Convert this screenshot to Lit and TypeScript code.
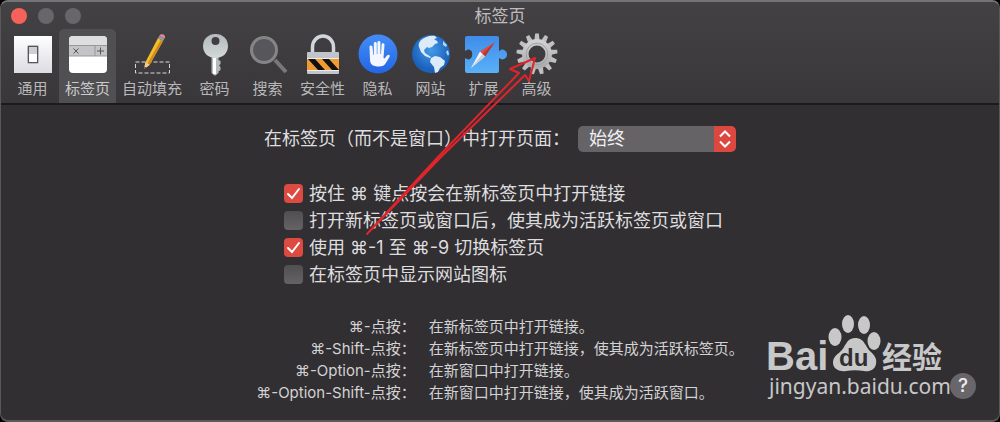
import { LitElement, html, css, svg } from "lit";
import { customElement, state } from "lit/decorators.js";

const general = svg`
  <rect x="2" y="3" width="38" height="37" fill="url(#g-white)"/>
  <rect x="15" y="12" width="12" height="19" rx="2" fill="#b9b9bd"/>
  <rect x="16.500" y="13.500" width="9" height="16" fill="#fff" stroke="#55555a" stroke-width="1"/>
  <rect x="17" y="14" width="8" height="7" fill="#cfcfd3"/>`;

const tabs = svg`
  <rect x="2" y="3" width="38" height="37" rx="4" fill="#fff"/>
  <path d="M2 12V7a4 4 0 0 1 4-4h30a4 4 0 0 1 4 4v5z" fill="#dededf"/>
  <rect x="2" y="12" width="38" height="11" fill="#c4c4c6"/>
  <path d="M2 12.500H40M2 23H40M28 12v11" stroke="#98989b" stroke-width="1"/>
  <path d="M6.500 15.500l5 5m0-5l-5 5M33.500 14.500v7m-3.500-3.500h7" stroke="#55555a" stroke-width="1"/>`;

const autofill = svg`
  <rect x="4.500" y="29" width="34" height="11" fill="none" stroke="#d8d8da" stroke-dasharray="4 2"/>
  <path d="M13 36l1.500-7L27 5l5 3-13.500 24z" fill="#f3bd2e"/>
  <path d="M18.500 32L32 8l-2-1.200L16.500 30.500z" fill="#d18b1c"/>
  <path d="M13 36l1.500-7 4 3z" fill="#edcfa5"/><path d="M13 36l.5-2.500 1.500 1z" fill="#333"/>
  <path d="M27 5l1.500-2.500 5 3L32 8z" fill="#8b98a8"/>
  <path d="M28.500 2.500C30-.5 36 2 33.500 5.500z" fill="#e0899a"/>`;

const key = svg`
  <path d="M17.500 24h7v3l2 1v3l-1.500 1.500 1.500 1.500v3l-2 1.500V40l-3 2.500h-1L17.500 40z" fill="#b4bbbd"/>
  <path fill-rule="evenodd" d="M21.500 1a12 12 0 0 1 12.500 12c0 7-5 12-12.500 12S9 20 9 13A12 12 0 0 1 21.500 1zm0 3a4 4 0 1 0 0 8 4 4 0 0 0 0-8z" fill="url(#g-key)"/>
  <path d="M20.500 25v16" stroke="#fff" stroke-width="3"/>`;

const search = svg`
  <path d="M28 27L39 39" stroke="#78787b" stroke-width="4"/>
  <circle cx="17" cy="17" r="12.500" fill="#57575b" stroke="#858588" stroke-width="3"/>`;

const lock = svg`
  <path d="M10.500 22V14a10.500 11 0 0 1 21 0v8" fill="none" stroke="#d2d6db" stroke-width="3.500"/>
  <rect x="5" y="19" width="32" height="22" rx="1" fill="#bfc5ca"/>
  <rect x="5" y="26" width="32" height="11" fill="#f29a32"/>
  <path d="M6 26h7l10 11h-7zM20 26h7l10 11h-7z" fill="#111"/>
  <path d="M5 25.500h32M5 37.500h32" stroke="#eceff1"/>`;

const hand = svg`
  <circle cx="21" cy="21" r="19.500" fill="url(#g-blue)"/>
  <path d="M13 27L12.500 14c0-2 2.800-2 3 0l.8 8 .5 0V10.500c0-2 3-2 3 0V21h.6V9.500c0-2 3-2 3 0V21h.6l.6-9.500c.2-2 3-1.600 2.900.2L26.500 25l1 .5 2.500-3c1.300-1.500 3.500-.5 2.500 1.500l-4 6.500c-1 1.800-3 3-6.500 3C16 33.500 13.200 31.500 13 27z" fill="#f4f7ff"/>`;

const globe = svg`
  <circle cx="21" cy="21" r="19" fill="url(#g-globe)"/>
  <path d="M11 7c4-3 9-5 14-4l2 2-3 1 3 2 1 2-3 1-3 3-3 1-2-1-3 3 1 3 3 2 3 2-1 1-5-2-4-4-2-5c-1-2 0-5 2-7z" fill="#dcebfa"/>
  <path d="M21 25l4-2 5 1 5 4-1 4-4 3-2 4-3 1-1-6-4-5z" fill="#dcebfa"/>
  <path d="M33 8l4 4-1 2-3-2zM38 17l1 4-1 2-2-4z" fill="#b8d7f3"/>`;

const extension = svg`
  <path d="M2 5q0-2 2-2h30q2 0 2 2v13c2-1 3-2 5-1 4 1 4 8 0 9-2 1-3 0-5-1v13q0 2-2 2H4q-2 0-2-2V25c2 1 3 2 5 1 3-2 3-8 0-9-2-1-3 0-5 1z" fill="url(#g-ext)"/>
  <path d="M32 9L17 18.500l5 5z" fill="#df4b3f"/><path d="M32 9L22 23.500 19.500 21z" fill="#b33535"/>
  <path d="M8 35l9-16.500 5 5z" fill="#f4f5f6"/><path d="M8 35l11.500-14L22 23.500z" fill="#c9ced3"/>`;

const teeth = Array.from({ length: 13 }, (_, i) =>
  svg`<path d="M18.300 8L19.200 .5h3.600l.9 7.500z" transform=${`rotate(${(i * 360) / 13} 21 21)`} fill="#bfc0c2"/>`
);
const gear = svg`${teeth}
  <circle cx="21" cy="21" r="11.700" fill="none" stroke="url(#g-gear)" stroke-width="6.500"/>
  <circle cx="21" cy="21" r="10.800" fill="none" stroke="#a0a1a4" stroke-width="1"/>`;

const PANES = [
  { name: "通用", icon: general },
  { name: "标签页", icon: tabs },
  { name: "自动填充", icon: autofill },
  { name: "密码", icon: key },
  { name: "搜索", icon: search },
  { name: "安全性", icon: lock },
  { name: "隐私", icon: hand },
  { name: "网站", icon: globe },
  { name: "扩展", icon: extension },
  { name: "高级", icon: gear },
];

const OPTIONS = [
  { label: "按住 ⌘ 键点按会在新标签页中打开链接", on: true },
  { label: "打开新标签页或窗口后，使其成为活跃标签页或窗口", on: false },
  { label: "使用 ⌘-1 至 ⌘-9 切换标签页", on: true },
  { label: "在标签页中显示网站图标", on: false },
];

const SHORTCUTS = [
  ["⌘-点按：", "在新标签页中打开链接。"],
  ["⌘-Shift-点按：", "在新标签页中打开链接，使其成为活跃标签页。"],
  ["⌘-Option-点按：", "在新窗口中打开链接。"],
  ["⌘-Option-Shift-点按：", "在新窗口中打开链接，使其成为活跃窗口。"],
];

@customElement("pane-button")
class PaneButton extends LitElement {
  static properties = {
    label: {},
    icon: { attribute: false },
    selected: { type: Boolean },
  };
  declare label: string;
  declare icon: unknown;
  declare selected: boolean;

  static styles = css`
    :host { display: block; }
    button {
      display: flex;
      flex-direction: column;
      align-items: center;
      gap: 2px;
      box-sizing: border-box;
      min-width: 53px;
      height: 100%;
      padding: 4px 6px 0;
      border: 0;
      border-radius: 5px 5px 0 0;
      background: none;
      color: #b9b8ba;
      font: 15px/22px Inter, "Noto Sans CJK SC", sans-serif;
      white-space: nowrap;
    }
    .selected { background: #504f52; color: #cccbcd; }
    svg { display: block; width: 42px; height: 43px; margin: 0 -6px; overflow: visible; }
  `;

  render() {
    return html`<button class=${this.selected ? "selected" : ""} aria-pressed=${this.selected ? "true" : "false"}>
      <svg viewBox="0 0 42 43" aria-hidden="true">
        <defs>
          <linearGradient id="g-white" x2="0" y2="1"><stop stop-color="#fff"/><stop offset="1" stop-color="#dcdce2"/></linearGradient>
          <linearGradient id="g-key" x2="0" y2="1"><stop stop-color="#b3babb"/><stop offset="1" stop-color="#d3d8d8"/></linearGradient>
          <linearGradient id="g-blue" x2="0" y2="1"><stop stop-color="#438df8"/><stop offset="1" stop-color="#2465e4"/></linearGradient>
          <linearGradient id="g-ext" x2="0" y2="1"><stop stop-color="#3f8cea"/><stop offset="1" stop-color="#59b1f7"/></linearGradient>
          <linearGradient id="g-gear" x2="0" y2="1"><stop stop-color="#d0d0d2"/><stop offset="1" stop-color="#acadaf"/></linearGradient>
          <radialGradient id="g-globe" cy=".4"><stop stop-color="#459be9"/><stop offset="1" stop-color="#1b62bc"/></radialGradient>
        </defs>
        ${this.icon}
      </svg>
      <span>${this.label}</span>
    </button>`;
  }
}

@customElement("app-root")
class AppRoot extends LitElement {
  @state() pane = "标签页";

  static styles = css`
    :host {
      display: block;
      background: #000;
      color: #dedddf;
      font-family: Inter, "Noto Sans CJK SC", sans-serif;
    }
    .window {
      position: relative;
      box-sizing: border-box;
      display: flex;
      flex-direction: column;
      min-height: 100vh;
      border: 1px solid #59585a;
      border-width: 2px 1px;
      border-top-color: #747375;
      border-radius: 8px;
      overflow: hidden;
      background: #312f32;
    }
    header {
      background: linear-gradient(#434144, #39373a);
      border-bottom: 2px solid #1b1a1c;
    }
    .titlebar {
      display: grid;
      grid-template-columns: 1fr auto 1fr;
      align-items: center;
      height: 27px;
      padding: 0 10px;
    }
    h1 { margin: 0; font-size: 17px; line-height: 26px; font-weight: 400; color: #bdbcbe; }
    .lights { display: flex; gap: 11px; }
    .light { width: 16px; height: 16px; padding: 0; border: 0; border-radius: 50%; background: #68666a; }
    .close { background: #f6625a; }
    nav { display: flex; height: 74px; padding: 0 5px; }
    main { display: flex; flex-direction: column; align-items: center; padding: 20px 20px 10px; }
    .open-in { display: flex; align-items: center; gap: 8px; font-size: 18px; line-height: 28px; white-space: nowrap; }
    .picker { display: grid; }
    .picker > * { grid-area: 1 / 1; }
    select {
      appearance: none;
      width: 158px;
      height: 26px;
      padding: 0 32px 0 11px;
      border: 0;
      border-radius: 5px;
      background: linear-gradient(90deg, #656366 136px, #dc4840 136px);
      color: #efeef0;
      font: 18px/26px Inter, "Noto Sans CJK SC", sans-serif;
    }
    .chevrons { justify-self: end; width: 22px; height: 26px; pointer-events: none; }
    .options { width: 432px; margin: 27px 0 0; padding: 0; list-style: none; }
    .options label { display: flex; align-items: center; gap: 6px; font-size: 18px; line-height: 27px; white-space: nowrap; }
    input {
      appearance: none;
      flex: none;
      width: 19px;
      height: 19px;
      margin: 0;
      border-radius: 4px;
      background: linear-gradient(#504e51, #656366);
    }
    input:checked {
      background: #dd4a42 url("data:image/svg+xml,%3Csvg xmlns='http://www.w3.org/2000/svg' viewBox='0 0 19 19'%3E%3Cpath d='M4 10l4 4 7-9' fill='none' stroke='white' stroke-width='2' stroke-linecap='round'/%3E%3C/svg%3E");
    }
    dl {
      display: grid;
      grid-template-columns: auto auto;
      column-gap: 13px;
      margin: 28px 0 0;
      font-size: 15px;
      line-height: 22px;
      color: #d3d2d4;
      white-space: nowrap;
    }
    dt { text-align: right; }
    dd { margin: 0; }
    .help {
      position: absolute;
      right: 23px;
      bottom: 21px;
      width: 26px;
      height: 26px;
      padding: 0;
      border: 0;
      border-radius: 50%;
      background: #68666a;
      color: #efeef0;
      font: 500 19px/26px Inter, sans-serif;
    }
    .brand { position: absolute; right: 49px; bottom: 14px; width: 182px; height: 92px; fill: #c8c8c9; overflow: visible; }
    .brand-name { font: bold 40px "Liberation Sans", sans-serif; }
    .brand-du { font: bold 24px "Liberation Sans", sans-serif; fill: #312f32; }
    .brand-cn { font: bold 30px "Noto Sans CJK SC", sans-serif; }
    .brand-url { font: 21px "Noto Sans", sans-serif; }
    .pointer { position: absolute; left: 364px; top: 52px; width: 176px; height: 184px; fill: none; stroke: #e0242c; stroke-width: 2; stroke-linejoin: round; }
  `;

  render() {
    return html`<div class="window">
      <header>
        <div class="titlebar">
          <div class="lights">
            <button class="light close" aria-label="关闭"></button>
            <button class="light" aria-label="最小化"></button>
            <button class="light" aria-label="缩放"></button>
          </div>
          <h1>${this.pane}</h1>
        </div>
        <nav>
          ${PANES.map((p) => html`<pane-button .label=${p.name} .icon=${p.icon} .selected=${p.name === this.pane}></pane-button>`)}
        </nav>
      </header>
      <main>
        <div class="open-in">
          <label for="open-in">在标签页（而不是窗口）中打开页面：</label>
          <div class="picker">
            <select id="open-in"><option>始终</option></select>
            <svg class="chevrons" viewBox="0 0 22 26" fill="none" stroke="#fff" stroke-width="2" aria-hidden="true">
              <path d="M6 10.500L11 5.500l5 5M6 15.500L11 20.500l5-5"/>
            </svg>
          </div>
        </div>
        <ul class="options">
          ${OPTIONS.map((o) => html`<li><label><input type="checkbox" .checked=${o.on}>${o.label}</label></li>`)}
        </ul>
        <dl>${SHORTCUTS.map(([k, v]) => html`<dt>${k}</dt><dd>${v}</dd>`)}</dl>
      </main>
      <svg class="brand" viewBox="0 0 182 92" aria-hidden="true">
        <text class="brand-name" x="-2" y="56">Bai</text>
        <ellipse cx="67" cy="23" rx="6.500" ry="9"/>
        <ellipse cx="80" cy="10" rx="6" ry="9"/>
        <ellipse cx="96" cy="11" rx="6" ry="9"/>
        <ellipse cx="106" cy="27" rx="6.500" ry="9"/>
        <path d="M87 24c10 0 10 9 16 14 4 4 6 7 5 12-1 6-7 8-12 7-6-1-12-1-18 0s-13-2-13-8c0-5 3-8 7-11 6-5 6-14 15-14z"/>
        <text class="brand-du" x="71" y="52">du</text>
        <text class="brand-cn" x="114" y="54">经验</text>
        <text class="brand-url" x="1" y="80">jingyan.baidu.com</text>
      </svg>
      <button class="help" aria-label="帮助">?</button>
      <svg class="pointer" viewBox="365 54 176 184" aria-hidden="true">
        <path d="M367 234L438 157 519 73 510 69 535 58 529 81 525 75 440 158z"/>
      </svg>
    </div>`;
  }
}
